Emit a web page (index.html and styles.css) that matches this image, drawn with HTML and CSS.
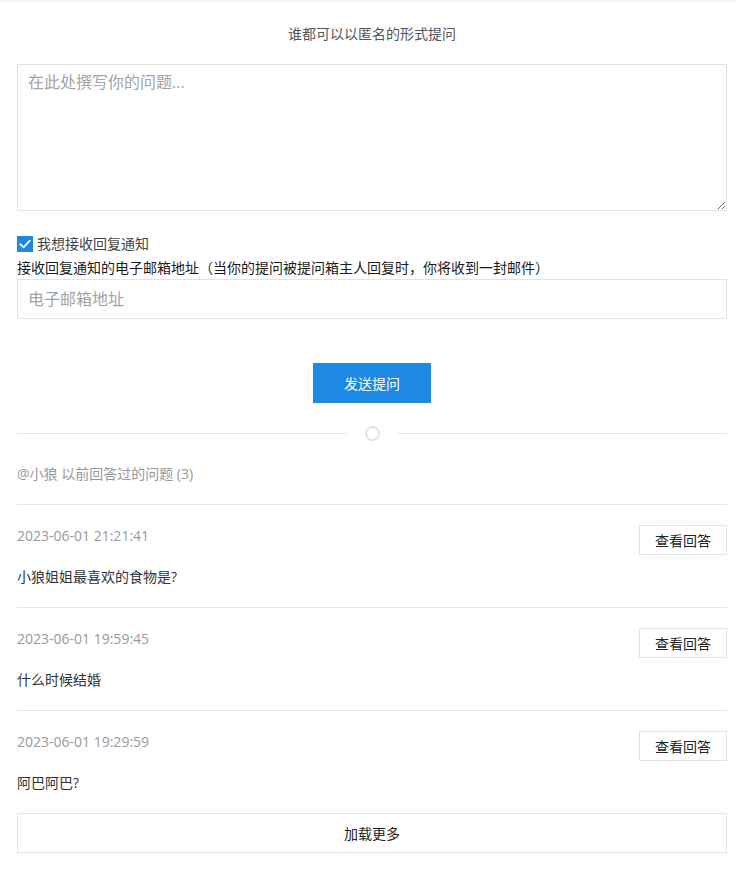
FILE: index.html
```html
<!DOCTYPE html>
<html lang="zh-CN">
<head>
<meta charset="utf-8">
<title>提问箱</title>
<link rel="stylesheet" href="styles.css">
</head>
<body>
<div class="topbar"></div>
<div class="container">
  <div class="title">谁都可以以匿名的形式提问</div>
  <textarea class="question-input" placeholder="在此处撰写你的问题..."></textarea>
  <label class="notify-row">
    <span class="checkbox">
      <svg width="16" height="16" viewBox="0 0 16 16"><path d="M3.2 8.2 L6.6 11.4 L12.8 4.6" fill="none" stroke="#fff" stroke-width="1.8" stroke-linecap="round" stroke-linejoin="round"/></svg>
    </span>
    <span class="notify-text">我想接收回复通知</span>
  </label>
  <div class="email-label">接收回复通知的电子邮箱地址（当你的提问被提问箱主人回复时，你将收到一封邮件）</div>
  <input class="email-input" type="text" placeholder="电子邮箱地址">
  <div class="send-wrap"><button class="send-btn">发送提问</button></div>
  <div class="divider"><span class="line"></span><span class="circle"></span><span class="line"></span></div>
  <div class="count">@小狼 以前回答过的问题 (3)</div>
  <div class="list">
    <div class="item">
      <div class="item-head"><span class="date">2023-06-01 21:21:41</span><button class="view-btn">查看回答</button></div>
      <div class="item-q">小狼姐姐最喜欢的食物是?</div>
    </div>
    <div class="item">
      <div class="item-head"><span class="date">2023-06-01 19:59:45</span><button class="view-btn">查看回答</button></div>
      <div class="item-q">什么时候结婚</div>
    </div>
    <div class="item last">
      <div class="item-head"><span class="date">2023-06-01 19:29:59</span><button class="view-btn">查看回答</button></div>
      <div class="item-q">阿巴阿巴?</div>
    </div>
  </div>
  <button class="more-btn">加载更多</button>
</div>
</body>
</html>
```
FILE: styles.css
```css
* { box-sizing: border-box; }
body {
  margin: 0;
  background: #fff;
  font-family: "Open Sans", "Noto Sans CJK SC", sans-serif;
  color: #333;
  font-size: 14px;
}
.topbar { height: 3px; background: #f7f7f7; }
.container {
  padding: 0 9px 0 17px;
  display: flex;
  flex-direction: column;
}
.title {
  margin-top: 21px;
  line-height: 20px;
  text-align: center;
  color: #555;
  font-size: 14px;
}
.question-input {
  display: block;
  width: 100%;
  height: 147px;
  margin-top: 20px;
  border: 1px solid #e3e3e3;
  padding: 6px 10px;
  font-family: inherit;
  font-size: 16px;
  line-height: 22px;
  color: #333;
  outline: none;
}
.question-input::placeholder, .email-input::placeholder { color: #a3a3a3; }
.notify-row {
  margin-top: 25px;
  display: flex;
  align-items: center;
  height: 16px;
}
.checkbox {
  width: 16px;
  height: 16px;
  background: #1e88e5;
  display: flex;
}
.notify-text {
  margin-left: 4px;
  line-height: 16px;
  color: #444;
}
.email-label {
  margin-top: 6px;
  line-height: 20px;
  color: #1a1a1a;
}
.email-input {
  margin-top: 1px;
  width: 100%;
  height: 40px;
  border: 1px solid #e3e3e3;
  padding: 0 10px;
  font-family: inherit;
  font-size: 16px;
  outline: none;
}
.send-wrap {
  margin-top: 44px;
  display: flex;
  justify-content: center;
}
.send-btn {
  width: 118px;
  height: 40px;
  border: none;
  background: #1e88e5;
  color: #fff;
  font-family: inherit;
  font-size: 14px;
}
.divider {
  margin-top: 23px;
  display: flex;
  align-items: center;
  height: 14px;
}
.divider .line { flex: 1; height: 1px; background: #e5e5e5; }
.divider .circle {
  width: 15px;
  height: 15px;
  border: 2px solid #e2e2e2;
  border-radius: 50%;
  margin: 0 18px;
}
.count {
  margin-top: 24px;
  line-height: 20px;
  color: #999;
  padding-bottom: 20px;
  border-bottom: 1px solid #e5e5e5;
}
.item {
  padding: 20px 0;
  border-bottom: 1px solid #e5e5e5;
}
.item.last { border-bottom: none; }
.item-head {
  display: flex;
  justify-content: space-between;
  align-items: flex-start;
}
.date {
  margin-top: 1px;
  line-height: 20px;
  color: #999;
}
.view-btn {
  width: 88px;
  height: 30px;
  border: 1px solid #e3e3e3;
  background: #fff;
  color: #222;
  font-family: inherit;
  font-size: 14px;
  padding: 0;
}
.item-q {
  margin-top: 12px;
  line-height: 20px;
  color: #333;
}
.more-btn {
  width: 100%;
  height: 40px;
  border: 1px solid #e3e3e3;
  background: #fff;
  color: #222;
  font-family: inherit;
  font-size: 14px;
}
```
